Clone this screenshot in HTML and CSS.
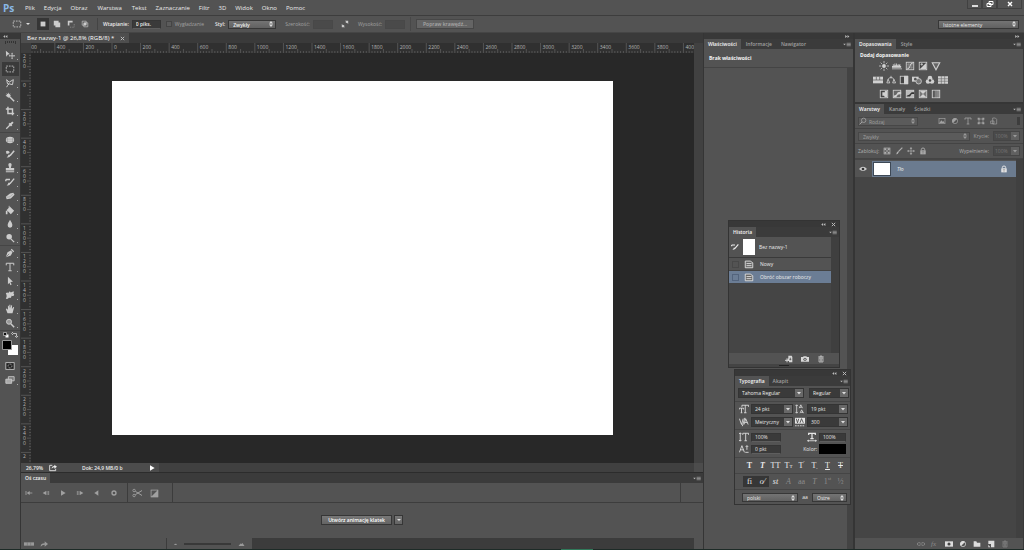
FILE: index.html
```html
<!DOCTYPE html>
<html lang="pl">
<head>
<meta charset="utf-8">
<title>Bez nazwy-1</title>
<link rel="stylesheet" href="styles.css">
</head>
<body>
<svg class="sprite" aria-hidden="true">
  <symbol id="menu" viewBox="0 0 9 6"><path d="M0 2h3L1.500 4z" fill="currentColor"/><path d="M4 1.500h5M4 3h5M4 4.500h5" stroke="currentColor" stroke-width=".7"/></symbol>
  <symbol id="right2" viewBox="0 0 6 4"><path d="M0 0l2.500 2L0 4zM3 0l2.500 2L3 4z" fill="currentColor"/></symbol>
  <symbol id="left2" viewBox="0 0 6 4"><path d="M2.500 0L0 2l2.500 2zM5.500 0L3 2l2.500 2z" fill="currentColor"/></symbol>
  <symbol id="close" viewBox="0 0 6 6"><path d="M1 1l4 4M5 1L1 5" stroke="currentColor" stroke-width="1.200"/></symbol>
  <symbol id="move" viewBox="0 0 12 12"><path d="M1 1l5 4-2.500.3L1.500 8z" fill="currentColor"/><path d="M8.500 4v6M5.500 7h6" stroke="currentColor"/><path d="M8.500 3l1 1.500h-2zM8.500 11l1-1.500h-2zM4.500 7L6 6v2zM12 7l-1.500-1v2z" fill="currentColor"/></symbol>
  <symbol id="marquee" viewBox="0 0 12 12"><rect x="1.500" y="2.500" width="9" height="7" fill="none" stroke="currentColor" stroke-dasharray="2 1.200"/></symbol>
  <symbol id="lasso" viewBox="0 0 12 12"><path d="M2 2l3 3 5-3-1 6-4-1-2 2-1 2M2 2l1 5 2 0" fill="none" stroke="currentColor" stroke-width="1.200"/></symbol>
  <symbol id="wand" viewBox="0 0 12 12"><path d="M5 5l6 6" stroke="currentColor" stroke-width="1.800"/><circle cx="4" cy="4" r="2" fill="currentColor"/><path d="M4 1v6M1 4h6M2 2l4 4M6 2L2 6" stroke="currentColor" stroke-width="1"/></symbol>
  <symbol id="crop" viewBox="0 0 12 12"><path d="M3.500 1v8H11M1 3.500h8V11" fill="none" stroke="currentColor" stroke-width="1.700"/></symbol>
  <symbol id="dropper" viewBox="0 0 12 12"><path d="M1.500 10.500L6 6" stroke="currentColor" stroke-width="1.500"/><path d="M5 4l3 3M6.500 5.500L9.500 2.500" stroke="currentColor" stroke-width="2.400"/></symbol>
  <symbol id="patch" viewBox="0 0 12 12"><ellipse cx="6" cy="6" rx="5" ry="3.800" fill="currentColor"/><path d="M3 3v6M9 3v6M1 5h10M1 7.500h10" stroke="#888" stroke-width=".5"/></symbol>
  <symbol id="brush" viewBox="0 0 12 12"><path d="M11 2L6 8" stroke="currentColor" stroke-width="1.800"/><path d="M1 3q2-2 4 0t-3 3M7 7q-1 4-5 3 2-1 2-3z" fill="currentColor"/></symbol>
  <symbol id="stamp" viewBox="0 0 12 12"><path d="M4 2a2 2 0 0 1 4 0L7 6h4v3H1V6h4zM1 10h10v1H1z" fill="currentColor"/></symbol>
  <symbol id="hist" viewBox="0 0 12 12"><path d="M11 2L6 8M1 3h5M1 3v2" fill="none" stroke="currentColor" stroke-width="1.700"/><path d="M7 7q-1 4-5 3 2-1 2-3z" fill="currentColor"/></symbol>
  <symbol id="eraser" viewBox="0 0 12 12"><path d="M1 7l5-4 4-1 1.500 2.500L7 9l-5 1z" fill="currentColor"/><path d="M2 7.500l4-.5 4-4" fill="none" stroke="#888" stroke-width=".6"/></symbol>
  <symbol id="bucket" viewBox="0 0 12 12"><path d="M2 6l4-4 5 5-4 4zM1 7h2v4H1z" fill="currentColor"/><path d="M5 5V1" stroke="currentColor"/></symbol>
  <symbol id="drop" viewBox="0 0 12 12"><path d="M6 1q6 9 0 9.500Q0 10 6 1z" fill="currentColor"/></symbol>
  <symbol id="dodge" viewBox="0 0 12 12"><circle cx="5" cy="4.500" r="3.300" fill="currentColor"/><path d="M7 7l4 4" stroke="currentColor" stroke-width="1.500"/></symbol>
  <symbol id="pen" viewBox="0 0 12 12"><path d="M1 11l2-6 4-2 2 2-2 4zM7 2l1-1 3 3-1 1z" fill="currentColor"/><path d="M1 11l4-4" stroke="#555" stroke-width=".7"/></symbol>
  <symbol id="type" viewBox="0 0 12 12"><path d="M1.500 4V1.500h9V4M6 1.500v9M4 10.500h4" fill="none" stroke="currentColor" stroke-width="1.200"/></symbol>
  <symbol id="arrow" viewBox="0 0 12 12"><path d="M3.500 1l6 6-3 .3 1.500 3-1.500.7L5.300 8l-1.800 2z" fill="currentColor"/></symbol>
  <symbol id="shape" viewBox="0 0 12 12"><path d="M1 4q2-2 3 0 1-4 3-1 3-2 4-1-2 2 0 3 0 3-3 2-1 4-3 2-3 3-4 1 2-2 0-6z" fill="currentColor"/></symbol>
  <symbol id="hand" viewBox="0 0 12 12"><path d="M3 11L1 6l1-.5L3.500 7V2h1L5.200 5V1h1.300v4l1-3.500h1L8.300 6 10 3.500l1 .5-2 7z" fill="currentColor"/></symbol>
  <symbol id="zoom" viewBox="0 0 12 12"><circle cx="4.800" cy="4.500" r="3" fill="#999" stroke="currentColor" stroke-width="1.200"/><path d="M7 7l4 4" stroke="currentColor" stroke-width="1.800"/></symbol>
  <symbol id="mask" viewBox="0 0 12 12"><rect x="1" y="2" width="10" height="8" fill="#222" stroke="currentColor"/><circle cx="6" cy="6" r="2.300" fill="#222" stroke="currentColor" stroke-width=".9" stroke-dasharray="1 .6"/></symbol>
  <symbol id="screens" viewBox="0 0 12 12"><path d="M4 2h7v5H4z" fill="#777" stroke="currentColor"/><path d="M1 5h7v5H1z" fill="#aaa" stroke="currentColor"/></symbol>
  <symbol id="sq1" viewBox="0 0 10 10"><rect x="2" y="2" width="6" height="6" fill="currentColor"/></symbol>
  <symbol id="sq2" viewBox="0 0 10 10"><path d="M1 1h6v2h2v6H3V7H1z" fill="currentColor"/></symbol>
  <symbol id="sq3" viewBox="0 0 10 10"><path d="M1 1h6v2H3v4H1z" fill="currentColor"/><path d="M4 9h5V4" fill="none" stroke="currentColor" stroke-dasharray="1 1" stroke-width=".6"/></symbol>
  <symbol id="sq4" viewBox="0 0 10 10"><path d="M1.500 1.500h5v5h-5zM3.500 3.500h5v5h-5z" fill="none" stroke="currentColor" stroke-width=".8"/><path d="M3.500 3.500h3v3h-3z" fill="currentColor"/></symbol>
  <symbol id="swap" viewBox="0 0 10 10"><path d="M4 7h-2M6 3h2" stroke="currentColor" stroke-width="1.200"/><path d="M5 1h4v4zM1 5v4h4z" fill="currentColor"/></symbol>
  <symbol id="sun" viewBox="0 0 12 12"><path d="M6 0v12M0 6h12M2 2l8 8M10 2l-8 8" stroke="currentColor" stroke-width=".9"/><circle cx="6" cy="6" r="3.400" fill="#535353"/><circle cx="6" cy="6" r="2.300" fill="currentColor"/></symbol>
  <symbol id="levels" viewBox="0 0 12 12"><path d="M0 8V6l1 0 0-2h1v2l1-1V3h1v2h1V3h1v3l1-2h1v2l1-2h1v2h1v2zM0 9h12v1H0z" fill="currentColor"/></symbol>
  <symbol id="curves" viewBox="0 0 12 12"><rect x="1.500" y="1.500" width="9" height="9" fill="#666" stroke="currentColor"/><path d="M2 10Q6 9 6 6t4-4" fill="none" stroke="currentColor" stroke-width="1.200"/><path d="M4.500 2v8M7.500 2v8M2 4.500h8M2 7.500h8" stroke="currentColor" stroke-width=".3"/></symbol>
  <symbol id="expo" viewBox="0 0 12 12"><rect x="1.500" y="1.500" width="9" height="9" fill="#444" stroke="currentColor"/><path d="M2 10l8-8v8z" fill="currentColor"/><path d="M3 4h3M4.500 2.500v3" stroke="currentColor"/></symbol>
  <symbol id="vib" viewBox="0 0 12 12"><path d="M1.500 2h9L6 10.500z" fill="#666" stroke="currentColor" stroke-width="1.300"/></symbol>
  <symbol id="hue" viewBox="0 0 12 12"><path d="M0 2h12v8H0z" fill="currentColor"/><path d="M4 2v4M8 2v4M0 6h12" stroke="#555" stroke-width=".8"/></symbol>
  <symbol id="scale" viewBox="0 0 12 12"><path d="M6 1v3M2.500 5Q6 1 9.500 5M2.500 5L1 9.500h3.500zM9.500 5L8 9.500h3.500z" fill="none" stroke="currentColor"/></symbol>
  <symbol id="bw" viewBox="0 0 12 12"><rect x="1.500" y="1.500" width="9" height="9" fill="#444" stroke="currentColor"/><path d="M6 1h5v10H6z" fill="currentColor"/></symbol>
  <symbol id="photo" viewBox="0 0 12 12"><path d="M0 2h8v6H0z" fill="currentColor"/><circle cx="8" cy="7.500" r="3.300" fill="#777" stroke="currentColor"/><circle cx="4" cy="5" r="1.600" fill="#555"/></symbol>
  <symbol id="mixer" viewBox="0 0 12 12"><circle cx="6" cy="3.800" r="2.800" fill="currentColor"/><circle cx="3.700" cy="7.800" r="2.800" fill="currentColor"/><circle cx="8.300" cy="7.800" r="2.800" fill="currentColor"/><circle cx="6" cy="6.500" r="1.500" fill="#444"/></symbol>
  <symbol id="grid" viewBox="0 0 12 12"><path d="M0 1.500h12v9H0z" fill="currentColor"/><path d="M0 4.500h12M0 7.500h12M4 1v10M8 1v10" stroke="#666" stroke-width=".7"/></symbol>
  <symbol id="invert" viewBox="0 0 12 12"><rect x="1.500" y="1.500" width="9" height="9" fill="#444" stroke="currentColor"/><path d="M7 2h3v8H7L6 8H4V4h3z" fill="currentColor"/></symbol>
  <symbol id="poster" viewBox="0 0 12 12"><rect x="1.500" y="1.500" width="9" height="9" fill="#666" stroke="currentColor"/><path d="M2 8l3-1 2-3 4-1v3L7 7 5 10H2z" fill="currentColor"/></symbol>
  <symbol id="thresh" viewBox="0 0 12 12"><rect x="1.500" y="1.500" width="9" height="9" fill="#bbb" stroke="currentColor"/><path d="M2 8l3-1 3-3h3v2H8L6 9H2z" fill="#333"/></symbol>
  <symbol id="select" viewBox="0 0 12 12"><rect x="1.500" y="1.500" width="9" height="9" fill="#777" stroke="currentColor"/><path d="M2 2l4 4 4-4zM2 10l4-4 4 4z" fill="currentColor"/></symbol>
  <symbol id="gmap" viewBox="0 0 12 12"><rect x="1.500" y="1.500" width="9" height="9" fill="#888" stroke="currentColor"/><path d="M3.500 2v8" stroke="#555" stroke-width="2"/><path d="M6 2v8" stroke="#777"/></symbol>
  <symbol id="image" viewBox="0 0 12 12"><rect x="1.500" y="2" width="9" height="8" fill="none" stroke="currentColor"/><path d="M2 9l3-4 2 2 1-1 2 3z" fill="currentColor"/></symbol>
  <symbol id="adjust" viewBox="0 0 12 12"><circle cx="6" cy="6" r="4" fill="none" stroke="currentColor"/><path d="M3 9a4 4 0 0 1 6-6z" fill="currentColor"/></symbol>
  <symbol id="frame" viewBox="0 0 12 12"><rect x="3" y="3" width="6" height="6" fill="none" stroke="currentColor"/><path d="M1 1h3v3H1zM8 1h3v3H8zM1 8h3v3H1zM8 8h3v3H8z" fill="currentColor"/></symbol>
  <symbol id="smart" viewBox="0 0 12 12"><path d="M4 1.500h4l2 2v7H4zM1 6h5v4H1z" fill="none" stroke="currentColor"/></symbol>
  <symbol id="checker" viewBox="0 0 12 12"><rect x="1.500" y="1.500" width="9" height="9" fill="#555" stroke="currentColor"/><path d="M2 2h3v3H2zM7 2h3v3H7zM5 5h2v2H5zM2 7h3v3H2zM7 7h3v3H7z" fill="currentColor"/></symbol>
  <symbol id="paint" viewBox="0 0 12 12"><path d="M11 1L5 7" stroke="currentColor" stroke-width="1.700"/><path d="M6 7q-1 4-5 4 2-1 2-4z" fill="currentColor"/></symbol>
  <symbol id="cross" viewBox="0 0 12 12"><path d="M6 2v8M2 6h8" stroke="currentColor"/><path d="M6 0l2 2.500H4zM6 12l2-2.500H4zM0 6l2.500-2v4zM12 6L9.500 4v4z" fill="currentColor"/></symbol>
  <symbol id="lock" viewBox="0 0 12 12"><path d="M3.500 5V3.500q0-2 2.500-2t2.500 2V5" fill="none" stroke="currentColor" stroke-width="1.300"/><path d="M2 5h8v6H2z" fill="currentColor"/><path d="M4 7h4M4 9h4" stroke="#666" stroke-width=".8"/></symbol>
  <symbol id="eye" viewBox="0 0 12 12"><path d="M0 6q6-7 12 0-6 6-12 0z" fill="currentColor"/><circle cx="6" cy="6" r="2" fill="#333"/></symbol>
  <symbol id="link" viewBox="0 0 12 12"><path d="M5 4H2.500q-2 0-2 2t2 2H5M7 4h2.500q2 0 2 2t-2 2H7M4 6h4" fill="none" stroke="currentColor" stroke-width="1.200"/></symbol>
  <symbol id="lmask" viewBox="0 0 12 12"><path d="M0 2h12v8H0z" fill="currentColor"/><circle cx="6" cy="6" r="2.300" fill="#444"/></symbol>
  <symbol id="folder" viewBox="0 0 12 12"><path d="M1 2h4l1 2h5v6H1z" fill="currentColor"/></symbol>
  <symbol id="page" viewBox="0 0 12 12"><path d="M2 1h9v10H6V6H2z" fill="currentColor"/><path d="M2 7l3 4H2z" fill="currentColor"/></symbol>
  <symbol id="trash" viewBox="0 0 12 12"><path d="M3 4.500h6v6H3zM1.500 3h9M4.500 3V1.500h3V3M5 5v5M7 5v5" fill="none" stroke="currentColor"/></symbol>
  <symbol id="camera" viewBox="0 0 12 12"><path d="M0 3h3l1-1h4l1 1h3v7H0z" fill="currentColor"/><circle cx="6" cy="6.500" r="2.300" fill="#444"/><circle cx="6" cy="6.500" r="1.200" fill="currentColor"/></symbol>
  <symbol id="newdoc" viewBox="0 0 12 12"><path d="M5 1h5l1 2v8H6V9H4V6l1-1z" fill="currentColor"/><path d="M3 5v6M0 8h6" stroke="currentColor" stroke-width="1.400"/><path d="M8 4v4M6.500 6.500h3" stroke="#444"/></symbol>
  <symbol id="doc" viewBox="0 0 12 12"><path d="M1.500 2.500h6l3 2v6h-9zM3 5.500h6M3 8h6" fill="#666" stroke="currentColor"/></symbol>
  <symbol id="first" viewBox="0 0 12 12"><path d="M1.500 3v6M6 6h5" stroke="currentColor" stroke-width="1.300"/><path d="M7 3v6L2.500 6z" fill="currentColor"/></symbol>
  <symbol id="prev" viewBox="0 0 12 12"><path d="M6 3v6L1 6z" fill="currentColor"/><path d="M7.500 3v6M10 3v6" stroke="currentColor" stroke-width="1.200"/></symbol>
  <symbol id="play" viewBox="0 0 12 12"><path d="M3 2l7 4-7 4z" fill="currentColor"/></symbol>
  <symbol id="next" viewBox="0 0 12 12"><path d="M6 3v6l5-3z" fill="currentColor"/><path d="M2 3v6M4.500 3v6" stroke="currentColor" stroke-width="1.200"/></symbol>
  <symbol id="sound" viewBox="0 0 12 12"><path d="M8 2v8L2 6z" fill="currentColor"/></symbol>
  <symbol id="gear" viewBox="0 0 12 12"><circle cx="6" cy="6" r="3" fill="none" stroke="currentColor" stroke-width="2"/></symbol>
  <symbol id="cut" viewBox="0 0 12 12"><path d="M4 4l8 5M4 8l8-5" stroke="currentColor" stroke-width="1.200"/><circle cx="2.500" cy="3" r="1.500" fill="none" stroke="currentColor"/><circle cx="2.500" cy="9" r="1.500" fill="none" stroke="currentColor"/></symbol>
  <symbol id="trans" viewBox="0 0 12 12"><rect x="2.500" y="2.500" width="8" height="8" fill="none" stroke="currentColor"/><path d="M2 11l9-9v9z" fill="currentColor"/></symbol>
  <symbol id="export" viewBox="0 0 12 12"><path d="M5 2H1v8h9V7" fill="none" stroke="currentColor" stroke-width="1.300"/><path d="M4 7q0-4 4-4V1l4 3-4 3V5q-2 0-4 2z" fill="currentColor"/></symbol>
  <symbol id="share" viewBox="0 0 12 12"><path d="M1 10q0-5 6-5V2l5 4-5 4V7q-4 0-6 3z" fill="currentColor"/></symbol>
  <symbol id="frames" viewBox="0 0 12 6"><path d="M0 1h12v4H0z" fill="currentColor"/><path d="M4 1v4M8 1v4" stroke="#666" stroke-width=".6"/></symbol>
  <symbol id="hill" viewBox="0 0 12 8"><path d="M0 8l4-5 2 1 2-2 4 6z" fill="currentColor"/></symbol>
  <symbol id="search" viewBox="0 0 12 12"><circle cx="7" cy="5" r="3.300" fill="none" stroke="currentColor" stroke-width="1.200"/><path d="M4.500 7.500L1 11" stroke="currentColor" stroke-width="1.500"/></symbol>
  <symbol id="size" viewBox="0 0 12 12"><path d="M3.500 3.500V1.500h8v2M7.500 1.500v9M6 10.500h3M.5 6.500V5h5v1.500M3 5v5.500M2 10.500h2" fill="none" stroke="currentColor"/></symbol>
  <symbol id="leading" viewBox="0 0 12 12"><path d="M2 1v10M.5 2.500L2 1l1.500 1.500M.5 9.500L2 11l1.500-1.500M5 5l2-4 2 4M6 4h2M6 11l2-4 2 4M7 10h3" fill="none" stroke="currentColor" stroke-width=".9"/></symbol>
  <symbol id="kern" viewBox="0 0 12 12"><path d="M.5 2L3 9l2-7M6 9l2-7 3 7M7 6.500h3M7 1L4 11" fill="none" stroke="currentColor"/></symbol>
  <symbol id="track" viewBox="0 0 12 12"><path d="M0 1h12v7H0z" fill="currentColor"/><path d="M1.500 2L3 7l1.500-5M6 7l1.800-5L10 7" fill="none" stroke="#444"/><path d="M0 10.500h12" stroke="currentColor" stroke-dasharray="2 1"/></symbol>
  <symbol id="vscale" viewBox="0 0 12 12"><path d="M4.500 3.500v-2h7v2M8 1.500v9M6.500 10.500h3M1.500 1v10M0 2.500L1.500 1 3 2.500M0 9.500L1.500 11 3 9.500" fill="none" stroke="currentColor"/></symbol>
  <symbol id="hscale" viewBox="0 0 12 12"><path d="M2 3.500v-2h8v2M6 1v7M4 8h4" fill="none" stroke="currentColor" stroke-width="1.500"/><path d="M1 10.500h10" stroke="currentColor"/><path d="M0 10.500L2 9v3zM12 10.500L10 9v3z" fill="currentColor"/></symbol>
  <symbol id="baseline" viewBox="0 0 12 12"><path d="M.5 10l3-8 3 8M1.500 7h4M9.500 2v5M8 3.500L9.500 2 11 3.500M7.500 10h4" fill="none" stroke="currentColor"/></symbol>
</svg>

<header class="menubar">
  <span class="logo">Ps</span>
  <nav class="menus">
    <button>Plik</button><button>Edycja</button><button>Obraz</button><button>Warstwa</button><button>Tekst</button><button>Zaznaczanie</button><button>Filtr</button><button>3D</button><button>Widok</button><button>Okno</button><button>Pomoc</button>
  </nav>
  <div class="winctl">
    <button aria-label="Minimalizuj"><svg viewBox="0 0 12 8"><path d="M3 6h6" stroke="#fff" stroke-width="1.600"/></svg></button><button aria-label="Przywróć"><svg viewBox="0 0 12 8"><path d="M5 1.500h4v3H5zM3 3.500h4v3H3z" fill="#555" stroke="#fff"/></svg></button><button class="wide" aria-label="Zamknij"><svg viewBox="0 0 12 8"><path d="M4 2l4 4M8 2L4 6" stroke="#fff" stroke-width="1.400"/></svg></button>
  </div>
</header>

<div class="options">
  <svg class="ic preset"><use href="#marquee"/></svg><i class="caret"></i>
  <div class="modes">
    <button class="on" aria-label="Nowe zaznaczenie"><svg class="ic8"><use href="#sq1"/></svg></button><button aria-label="Dodaj"><svg class="ic8"><use href="#sq2"/></svg></button><button aria-label="Odejmij"><svg class="ic8"><use href="#sq3"/></svg></button><button aria-label="Przetnij"><svg class="ic8"><use href="#sq4"/></svg></button>
  </div>
  <label class="strong opt feather">Wtapianie: <input class="field w28" value="0 piks."></label>
  <label class="dim opt smooth"><input type="checkbox" disabled> Wygładzanie</label>
  <label class="strong opt style">Styl: <select class="sel w48"><option>Zwykły</option></select></label>
  <label class="dim opt dims">Szerokość: <input class="field off w20" disabled></label>
  <svg class="ic8 swap"><use href="#swap"/></svg>
  <label class="dim opt dims">Wysokość: <input class="field off w20" disabled></label>
  <i class="vr divider"></i>
  <button class="btn off refine" disabled>Popraw krawędź...</button>
  <select class="sel workspace" aria-label="Obszar roboczy"><option>Istotne elementy</option></select>
</div>

<div class="workarea">
  <aside class="toolbox">
    <div class="strip"><svg class="dbl"><use href="#left2"/></svg></div>
    <i class="grip"></i>
    <div class="group">
      <button aria-label="Przesunięcie"><svg class="ic"><use href="#move"/></svg></button>
      <button class="on" aria-label="Zaznaczenie"><svg class="ic"><use href="#marquee"/></svg></button>
      <button aria-label="Lasso"><svg class="ic"><use href="#lasso"/></svg></button>
      <button aria-label="Różdżka"><svg class="ic"><use href="#wand"/></svg></button>
      <button aria-label="Kadrowanie"><svg class="ic"><use href="#crop"/></svg></button>
      <button aria-label="Kroplomierz"><svg class="ic"><use href="#dropper"/></svg></button>
    </div>
    <div class="group">
      <button aria-label="Łatka"><svg class="ic"><use href="#patch"/></svg></button>
      <button aria-label="Pędzel"><svg class="ic"><use href="#brush"/></svg></button>
      <button aria-label="Stempel"><svg class="ic"><use href="#stamp"/></svg></button>
      <button aria-label="Pędzel historii"><svg class="ic"><use href="#hist"/></svg></button>
      <button aria-label="Gumka"><svg class="ic"><use href="#eraser"/></svg></button>
      <button aria-label="Wiadro"><svg class="ic"><use href="#bucket"/></svg></button>
      <button aria-label="Rozmywanie"><svg class="ic"><use href="#drop"/></svg></button>
      <button aria-label="Rozjaśnianie"><svg class="ic"><use href="#dodge"/></svg></button>
    </div>
    <div class="group">
      <button aria-label="Pióro"><svg class="ic"><use href="#pen"/></svg></button>
      <button aria-label="Tekst"><svg class="ic"><use href="#type"/></svg></button>
      <button aria-label="Zaznaczanie ścieżek"><svg class="ic"><use href="#arrow"/></svg></button>
      <button aria-label="Kształt"><svg class="ic"><use href="#shape"/></svg></button>
      <button aria-label="Rączka"><svg class="ic"><use href="#hand"/></svg></button>
      <button aria-label="Lupka"><svg class="ic"><use href="#zoom"/></svg></button>
    </div>
    <svg class="colors" viewBox="0 0 18 28" role="img" aria-label="Kolory"><path d="M4.500 3.500h3v3h-3z" fill="#fff"/><path d="M2.500 1.500h3v3h-3z" fill="#111" stroke="#ccc" stroke-width=".7"/><path d="M12 2.500h3.500v3M12 1l-1.500 1.500L12 4M14 5l1.500 1.500L17 5" fill="none" stroke="#ccc" stroke-width=".9"/><path d="M7 14h10v10H7z" fill="#fff"/><path d="M1.500 9.500h9v9h-9z" fill="#000" stroke="#999"/></svg>
    <div class="group last">
      <button class="flat" aria-label="Szybka maska"><svg class="ic"><use href="#mask"/></svg></button>
      <button aria-label="Tryb ekranu"><svg class="ic"><use href="#screens"/></svg></button>
    </div>
  </aside>

  <main class="center">
    <div class="doctabs"><span class="tab on">Bez nazwy-1 @ 26,8% (RGB/8) * <svg class="x"><use href="#close"/></svg></span></div>
    <div class="doc">
      <div class="corner"></div>
      <svg class="ruler-h" id="rulerH"></svg>
      <svg class="ruler-v" id="rulerV"></svg>
      <div class="canvas"><div class="paper"></div></div>
      <div class="vscroll"></div>
    </div>
    <div class="status">
      <span class="pct">26,79%</span><svg class="ic8"><use href="#export"/></svg><span class="size">Dok: 24,9 MB/0 b</span><svg class="ic8 go"><use href="#play"/></svg><span class="hscroll"></span>
    </div>
    <section class="timeline">
      <div class="tabs"><span class="tab on">Oś czasu</span><svg class="pm"><use href="#menu"/></svg></div>
      <div class="transport">
        <button aria-label="Pierwsza"><svg class="ic8"><use href="#first"/></svg></button><button aria-label="Poprzednia"><svg class="ic8"><use href="#prev"/></svg></button><button aria-label="Odtwórz"><svg class="ic8"><use href="#play"/></svg></button><button aria-label="Następna"><svg class="ic8"><use href="#next"/></svg></button><button aria-label="Dźwięk"><svg class="ic8"><use href="#sound"/></svg></button><button aria-label="Opcje"><svg class="ic8"><use href="#gear"/></svg></button><i class="vr"></i><button aria-label="Tnij"><svg class="ic"><use href="#cut"/></svg></button><button aria-label="Przejście"><svg class="ic"><use href="#trans"/></svg></button><i class="vr mid"></i><i class="vr end"></i>
      </div>
      <div class="create"><button class="btn">Utwórz animację klatek</button><button class="btn drop" aria-label="Więcej"><i class="caret"></i></button></div>
      <div class="tfoot">
        <svg class="ic8 wide"><use href="#frames"/></svg><svg class="ic8"><use href="#share"/></svg>
        <i class="vr"></i><svg class="hill small"><use href="#hill"/></svg><i class="slot"></i><svg class="hill"><use href="#hill"/></svg><i class="bar"></i>
      </div>
    </section>
  </main>

  <aside class="props">
    <div class="strip"><svg class="dbl"><use href="#right2"/></svg></div>
    <div class="tabs"><span class="tab on">Właściwości</span><span class="tab">Informacje</span><span class="tab">Nawigator</span><svg class="pm"><use href="#menu"/></svg></div>
    <h2>Brak właściwości</h2>
    <div class="pbody"></div>
  </aside>

  <aside class="side">
    <div class="strip"><svg class="dbl"><use href="#right2"/></svg></div>
    <div class="tabs"><span class="tab on">Dopasowania</span><span class="tab">Style</span><svg class="pm"><use href="#menu"/></svg></div>
    <div class="adjust">
      <h2>Dodaj dopasowanie</h2>
      <div class="arow"><svg class="ic"><use href="#sun"/></svg><svg class="ic"><use href="#levels"/></svg><svg class="ic"><use href="#curves"/></svg><svg class="ic"><use href="#expo"/></svg><svg class="ic"><use href="#vib"/></svg></div>
      <div class="arow six"><svg class="ic"><use href="#hue"/></svg><svg class="ic"><use href="#scale"/></svg><svg class="ic"><use href="#bw"/></svg><svg class="ic"><use href="#photo"/></svg><svg class="ic"><use href="#mixer"/></svg><svg class="ic"><use href="#grid"/></svg></div>
      <div class="arow"><svg class="ic"><use href="#invert"/></svg><svg class="ic"><use href="#poster"/></svg><svg class="ic"><use href="#thresh"/></svg><svg class="ic"><use href="#select"/></svg><svg class="ic"><use href="#gmap"/></svg></div>
    </div>
    <div class="tabs"><span class="tab on">Warstwy</span><span class="tab">Kanały</span><span class="tab">Ścieżki</span><svg class="pm"><use href="#menu"/></svg></div>
    <div class="lrow dim filter">
      <span class="kind"><svg class="ic8"><use href="#search"/></svg><select class="sel off" aria-label="Rodzaj filtra" disabled><option>Rodzaj</option></select></span>
      <span class="ficons"><svg class="ic8"><use href="#image"/></svg><svg class="ic8"><use href="#adjust"/></svg><svg class="ic8"><use href="#type"/></svg><svg class="ic8"><use href="#frame"/></svg><svg class="ic8"><use href="#smart"/></svg></span><i class="toggle"></i>
    </div>
    <div class="lrow dim"><select class="sel off blend" aria-label="Tryb mieszania" disabled><option>Zwykły</option></select><label class="right">Krycie: <select class="combo off w24" disabled><option>100%</option></select></label></div>
    <div class="lrow dim locks"><span>Zablokuj:</span><svg class="ic8"><use href="#checker"/></svg><svg class="ic8"><use href="#paint"/></svg><svg class="ic8"><use href="#cross"/></svg><svg class="ic8"><use href="#lock"/></svg><label class="right">Wypełnienie: <select class="combo off w24" disabled><option>100%</option></select></label></div>
    <div class="layers"><div class="layer"><svg class="ic8 vis"><use href="#eye"/></svg><div class="lsel"><i class="thumb"></i><em>Tło</em><svg class="ic8"><use href="#lock"/></svg></div></div></div>
    <div class="lfoot"><svg class="ic8 dimi"><use href="#link"/></svg><em class="dimi">fx</em><svg class="ic8"><use href="#lmask"/></svg><svg class="ic8"><use href="#adjust"/></svg><svg class="ic8"><use href="#folder"/></svg><svg class="ic8"><use href="#page"/></svg><svg class="ic8 dimi"><use href="#trash"/></svg></div>
  </aside>
</div>
<footer class="taskbar"><i></i></footer>

<section class="float history">
  <div class="strip"><svg class="dbl"><use href="#left2"/></svg><svg class="x"><use href="#close"/></svg></div>
  <div class="tabs"><span class="tab on">Historia</span><svg class="pm"><use href="#menu"/></svg></div>
  <div class="hlist">
    <div class="snap"><svg class="ic8"><use href="#hist"/></svg><i class="thumb"></i><span>Bez nazwy-1</span></div>
    <div class="hitem"><i class="box"></i><svg class="ic"><use href="#doc"/></svg><span>Nowy</span></div>
    <div class="hitem on"><i class="box"></i><svg class="ic"><use href="#doc"/></svg><span>Obróć obszar roboczy</span></div>
  </div>
  <div class="hfoot"><svg class="ic8"><use href="#newdoc"/></svg><svg class="ic8"><use href="#camera"/></svg><svg class="ic8"><use href="#trash"/></svg></div>
  <div class="edge"><i></i></div>
</section>

<section class="float typo">
  <div class="strip"><svg class="dbl"><use href="#left2"/></svg><svg class="x"><use href="#close"/></svg></div>
  <div class="tabs"><span class="tab on">Typografia</span><span class="tab">Akapit</span><svg class="pm"><use href="#menu"/></svg></div>
  <div class="fonts"><select class="combo" aria-label="Czcionka"><option>Tahoma Regular</option></select><select class="combo" aria-label="Styl czcionki"><option>Regular</option></select></div>
  <div class="metrics">
    <svg class="ic"><use href="#size"/></svg><select class="combo" aria-label="Rozmiar"><option>24 pkt</option></select><svg class="ic"><use href="#leading"/></svg><select class="combo" aria-label="Interlinia"><option>19 pkt</option></select>
    <svg class="ic"><use href="#kern"/></svg><select class="combo" aria-label="Kerning"><option>Metryczny</option></select><svg class="ic"><use href="#track"/></svg><select class="combo" aria-label="Światło"><option>300</option></select>
  </div>
  <div class="scales">
    <svg class="ic"><use href="#vscale"/></svg><input class="field" aria-label="Skala pionowa" value="100%"><svg class="ic rt"><use href="#hscale"/></svg><input class="field" aria-label="Skala pozioma" value="100%">
    <svg class="ic"><use href="#baseline"/></svg><input class="field" aria-label="Linia bazowa" value="0 pkt"><span class="rt">Kolor:</span><button class="swatch" aria-label="Kolor tekstu"></button>
  </div>
  <div class="glyphs"><button><b>T</b></button><button><b><i>T</i></b></button><button>TT</button><button>T<small>T</small></button><button>T<sup>'</sup></button><button>T<small>,</small></button><button><u>T</u></button><button><s>T</s></button></div>
  <div class="glyphs ot"><button class="on">fi</button><button class="on"><i>o</i>⁄</button><button><i>st</i></button><button class="dimi"><i>A</i></button><button class="dimi">aa</button><button class="dimi"><i>T</i></button><button class="dimi">1<sup>st</sup></button><button class="dimi">½</button></div>
  <div class="lang"><select class="sel" aria-label="Język"><option>polski</option></select><span class="aa">aa</span><select class="sel" aria-label="Wygładzanie tekstu"><option>Ostre</option></select></div>
</section>
<script src="rulers.js"></script>
</body>
</html>
```

FILE: styles.css
```css
* { box-sizing: border-box; }
html { background: #535353; }
body { margin: 0; min-height: 100vh; display: flex; flex-direction: column; position: relative; background: #535353; color: #ebebeb; font: 5px/8px "Open Sans", "Noto Sans", sans-serif; }
button, input, select { font: inherit; color: inherit; margin: 0; padding: 0; border: 0; background: none; border-radius: 0; }
select { appearance: none; }
select:disabled, input:disabled { opacity: 1; }
h2 { margin: 0; font-size: 5px; line-height: 8px; font-weight: 700; color: #f4f4f4; }
.sprite { position: absolute; width: 0; height: 0; }
.ic { width: 10px; height: 10px; flex: none; }
.ic8 { width: 8px; height: 8px; flex: none; }
.dim { color: #a2a2a2; }
.dimi { color: #8c8c8c; }
.strong { font-weight: 600; }
.caret { border: 2px solid transparent; border-top: 2px solid #ddd; border-bottom: 0; width: 4px; height: 2px; flex: none; }
.vr { width: 1px; align-self: stretch; background: #3c3c3c; }

.field { height: 9px; padding: 0 3px; background: #3a3a3a; border: 1px solid #353535; border-bottom-color: #5e5e5e; }
.field.off { background: #4a4a4a; border-color: #484848; }
.sel { height: 9px; padding: 0 9px 0 4px; border: 1px solid #373737; background: url("data:image/svg+xml,%3Csvg xmlns='http://www.w3.org/2000/svg' viewBox='0 0 4 6'%3E%3Cpath d='M0 2.500L2 0l2 2.500zM0 3.500L2 6l2-2.500z' fill='%23ddd'/%3E%3C/svg%3E") no-repeat right 2px center / 4px 6px, linear-gradient(#747474, #616161); }
.sel.off { color: #a0a0a0; border-color: #474747; background: url("data:image/svg+xml,%3Csvg xmlns='http://www.w3.org/2000/svg' viewBox='0 0 4 6'%3E%3Cpath d='M0 2.500L2 0l2 2.500zM0 3.500L2 6l2-2.500z' fill='%23999'/%3E%3C/svg%3E") no-repeat right 2px center / 4px 6px, #5b5b5b; }
.combo { width: 100%; height: 10px; padding: 0 10px 0 3px; border: 1px solid #343434; background: url("data:image/svg+xml,%3Csvg xmlns='http://www.w3.org/2000/svg' viewBox='0 0 8 8'%3E%3Cpath d='M0 0h8v8H0z' fill='%23686868'/%3E%3Cpath d='M2 3h4L4 5.500z' fill='%23ddd'/%3E%3C/svg%3E") no-repeat right center / 8px 8px, #3a3a3a; }
.combo.off { padding: 0 8px 0 1px; color: #757575; border-color: #454545; background: url("data:image/svg+xml,%3Csvg xmlns='http://www.w3.org/2000/svg' viewBox='0 0 8 8'%3E%3Cpath d='M0 0h8v8H0z' fill='%23606060'/%3E%3Cpath d='M2 3h4L4 5.500z' fill='%23999'/%3E%3C/svg%3E") no-repeat right center / 8px 8px, #4a4a4a; }
.btn { height: 10px; border: 1px solid #363636; background: linear-gradient(#787878, #646464); color: #fff; font-weight: 600; line-height: 8px; }
.btn.off { background: #646464; border-color: #474747; color: #a8a8a8; }
.w20 { width: 20px; }
.w24 { width: 27px; }
.w28 { width: 29px; }
.w48 { width: 48px; }

.menubar { display: flex; align-items: center; height: 15px; padding-left: 3px; }
.logo { color: #8ab8e6; font-size: 10px; line-height: 14px; font-weight: 700; width: 14px; }
.menus { display: flex; gap: 9px; margin-left: 8px; font-size: 6px; flex: 1; }
.menus button:nth-child(n+4) { padding-left: 1px; }
.menus button:nth-child(n+6) { padding-left: 0; }
.winctl { display: flex; align-self: flex-start; margin-right: 2px; }
.winctl button { width: 15px; height: 9px; border: 1px solid #414141; border-top: 0; display: grid; place-items: center; }
.winctl .wide { width: 25px; }
.winctl svg { width: 12px; height: 8px; }

.options { display: flex; align-items: center; height: 18px; padding: 0 5px 0 12px; border-top: 1px solid #3d3d3d; border-bottom: 1px solid #454545; }
.preset { color: #ccc; }
.options > .caret { margin-left: 4px; }
.modes { display: flex; gap: 2px; margin-left: 7px; padding-right: 6px; border-right: 1px solid #444; }
.modes button { width: 12px; height: 12px; display: grid; place-items: center; color: #ccc; }
.modes .on { background: #363636; }
.opt { display: flex; align-items: center; gap: 3px; }
.feather { margin-left: 5px; }
.smooth { margin-left: 5px; }
.smooth input { appearance: none; width: 6px; height: 6px; border: 1px solid #444; background: #5b5b5b; }
.style { margin-left: 11px; }
.dims { margin-left: 9px; }
.swap { margin-left: 8px; color: #ccc; }
.divider { margin: 0 5px; align-self: center; height: 14px; background: #484848; }
.refine { width: 58px; }
.workspace { margin-left: auto; width: 81px; }

.workarea { flex: 1; display: flex; background: #353535; }
.strip { height: 6px; background: #383838; display: flex; align-items: center; justify-content: flex-end; gap: 5px; padding: 0 3px; color: #bbb; }
.dbl { width: 5px; height: 3px; }
.x { width: 5px; height: 5px; color: #bbb; }
.tabs { display: flex; height: 10px; background: #3b3b3b; }
.tab { padding: 0 4px; line-height: 10px; color: #a0a0a0; font-weight: 600; white-space: nowrap; }
.tab.on { background: #535353; color: #f4f4f4; }
.pm { width: 8px; height: 5px; margin: 3px 2px 0 auto; color: #bbb; }

.toolbox { width: 20px; background: #535353; margin-right: 1px; display: flex; flex-direction: column; align-items: center; }
.toolbox .strip { align-self: stretch; justify-content: flex-start; }
.grip { width: 11px; height: 2px; margin: 2px 0 5px; border: 1px dotted #333; }
.group { align-self: stretch; display: flex; flex-direction: column; align-items: center; border-bottom: 1px solid #454545; }
.group button { width: 17px; height: 14px; display: grid; place-items: center; color: #ccc; background: linear-gradient(#aaa, #aaa) no-repeat right 1px bottom 2px / 1px 1px; }
.group .on { background: #3a3a3a; }
.colors { width: 18px; height: 28px; }
.last { border: 0; }
.group .flat { background: none; }

.center { flex: 1; min-width: 0; display: flex; flex-direction: column; margin-right: 1px; }
.doctabs { height: 10px; background: #3a3a3a; display: flex; }
.doctabs .tab { font-size: 6px; font-weight: 400; display: flex; align-items: center; gap: 6px; background: #4e4e4e; padding: 0 4px 0 6px; color: #fff; }
.doc { flex: 1; display: grid; grid-template: 10px 1fr / 10px 1fr 9px; background: #282828; }
.corner { background: #3d3d3d; }
.ruler-h { width: 100%; height: 10px; background: #303030; grid-column: 2; }
.ruler-v { width: 10px; height: 100%; min-height: 0; background: #303030; grid-row: 2; }
.ruler-h text, .ruler-v text { fill: #b5b5b5; font: 5px "Open Sans", sans-serif; }
.ruler-h path, .ruler-v path { stroke: #6c6c6c; fill: none; }
.canvas { grid-area: 2 / 2; padding: 28px 0 28px 81px; min-width: 0; }
.paper { width: 501px; height: 354px; background: #fff; }
.vscroll { grid-area: 1 / 3 / 3; background: #414141; }
.status { display: flex; align-items: center; height: 10px; background: #4c4c4c; padding-left: 5px; font-weight: 600; border-bottom: 1px solid #2c2c2c; }
.pct { width: 23px; }
.size { margin-left: 25px; width: 66px; }
.go { color: #fff; }
.hscroll { flex: 1; align-self: stretch; margin: 0 9px 0 3px; background: #404040; }
.timeline { background: #535353; }
.transport { display: flex; align-items: center; height: 20px; padding: 0 22px 0 4px; border-bottom: 1px solid #3d3d3d; color: #a0a0a0; }
.transport button { width: 16px; margin-right: 1px; height: 10px; display: flex; align-items: center; }
.transport .ic { margin-left: 4px; }
.transport .mid { margin-left: 10px; }
.transport .end { margin-left: auto; }
.create { display: flex; justify-content: center; gap: 2px; height: 35px; padding: 12px 0; }
.create .btn { width: 71px; }
.create .drop { width: 9px; display: grid; place-items: center; }
.tfoot { display: flex; align-items: center; height: 11px; padding: 0 9px 0 3px; color: #999; gap: 6px; }
.tfoot .wide { width: 10px; }
.tfoot .vr { margin-left: 112px; }
.hill { width: 9px; height: 4px; }
.small { width: 5px; height: 2px; }
.slot { width: 47px; height: 2px; background: #393939; }
.bar { flex: 1; align-self: stretch; background: #3c3c3c; }

.props { width: 149px; background: #535353; margin-right: 2px; display: flex; flex-direction: column; }
.props .tabs, .side .tabs { gap: 1px; }
.props h2 { padding: 5px; height: 19px; border-bottom: 1px solid #444; }
.pbody { flex: 1; border-right: 6px solid #434343; }
.side { width: 169px; background: #535353; display: flex; flex-direction: column; border-right: 1px solid #383838; }
.adjust { padding: 2px 5px; height: 55px; border-bottom: 2px solid #363636; }
.arow { display: flex; gap: 3px; height: 14px; align-items: center; padding-left: 19px; color: #d0d0d0; }
.arow.six { padding-left: 13px; }
.lrow { display: flex; align-items: center; height: 15px; padding: 0 3px; border-bottom: 1px solid #444; }
.right { margin-left: auto; display: flex; gap: 4px; align-items: center; }
.kind { display: flex; width: 60px; background: #5b5b5b; border: 1px solid #474747; height: 9px; align-items: center; }
.kind .sel { flex: 1; border: 0; height: 7px; padding-left: 2px; }
.ficons { display: flex; gap: 5px; margin-left: 20px; }
.toggle { margin-left: auto; width: 3px; height: 8px; background: #3d3d3d; }
.blend { width: 112px; }
.locks { gap: 4px; color: #b0b0b0; }
.layers { flex: 1; background: #454545; border-right: 7px solid #404040; padding-top: 1px; }
.layer { display: flex; align-items: center; background: #535353; height: 17px; }
.vis { margin: 0 5px 0 4px; color: #ccc; }
.lsel { flex: 1; height: 16px; background: #6b7b8f; display: flex; align-items: center; padding: 0 8px 0 2px; color: #f0f0f0; }
.lsel em { margin-left: 7px; flex: 1; }
.lsel .thumb { width: 16px; height: 12px; background: #fff; outline: 1px solid #3d4855; }
.lfoot { height: 11px; display: flex; align-items: center; justify-content: flex-end; gap: 6px; padding-right: 14px; color: #ddd; }
.lfoot em { font-family: "Liberation Serif", serif; font-size: 7px; width: 8px; }
.lfoot .dimi { color: #8c8c8c; }
.taskbar { height: 2px; background: #1d2b27; display: flex; }
.taskbar i { width: 32px; margin-left: 561px; background: #2f7a5a; }

.float { position: absolute; background: #535353; border: 1px solid #333; }
.history { top: 220px; right: 184px; width: 112px; }
.typo { top: 369px; right: 173px; width: 117px; }
.hlist { height: 116px; background: #454545; border-right: 8px solid #3f3f3f; }
.snap { display: flex; align-items: center; height: 21px; padding-left: 2px; background: #535353; border-bottom: 1px solid #3a3a3a; }
.snap .thumb { width: 12px; height: 16px; margin: 0 4px 0 4px; background: #fff; }
.hitem { display: flex; align-items: center; height: 13px; background: #535353; border-bottom: 1px solid #444; padding-left: 3px; }
.hitem .box { width: 7px; height: 7px; border: 1px solid #484848; margin-right: 5px; }
.hitem span { margin-left: 6px; }
.hitem.on { background: #6b7d95; }
.hitem.on .box { border-color: #53647d; }
.hfoot { display: flex; gap: 8px; height: 11px; align-items: center; justify-content: flex-end; padding-right: 14px; color: #d8d8d8; }
.edge { height: 3px; background: #444; display: grid; place-items: center; }
.edge i { width: 10px; height: 1px; background: #222; }
.fonts { display: grid; grid-template-columns: 66px 1fr; gap: 5px; padding: 2px 1px 3px 3px; border-bottom: 1px solid #454545; }
.metrics { display: grid; grid-template-columns: 10px 42px 10px 1fr; gap: 3px 2px; padding: 2px 2px 2px 4px; align-items: center; border-bottom: 1px solid #454545; color: #e6e6e6; }
.scales { display: grid; grid-template-columns: 10px 30px 34px 1fr; gap: 2px; padding: 2px 4px 3px 4px; align-items: center; border-bottom: 1px solid #454545; color: #e6e6e6; }
.scales .field { width: 100%; min-width: 0; }
.rt { justify-self: end; }
.swatch { height: 10px; background: #000; }
.glyphs { display: grid; grid-template-columns: repeat(8, 13px); height: 16px; align-items: center; padding-left: 8px; border-bottom: 1px solid #454545; font: 8px/10px "Liberation Serif", serif; }
.glyphs button { height: 11px; line-height: 10px; white-space: nowrap; }
.glyphs small, .glyphs sup { font-size: 5px; line-height: 1; }
.glyphs .on { background: #363636; }
.lang { display: grid; grid-template-columns: 56px 10px 35px; gap: 2px; padding: 3px 5px 2px 7px; }
.aa { text-align: center; }
```

FILE: rulers.js
```js
// Document units to screen pixels: 200 units span one labelled division.
const DIVISION = 200 / 7;
const MINOR = DIVISION / 10;

function buildRuler(svg, origin, vertical) {
  const length = vertical ? svg.clientHeight : svg.clientWidth;
  const first = -Math.ceil(origin / DIVISION);
  const last = Math.floor((length - origin) / DIVISION);
  let ticks = '';
  let labels = '';
  for (let n = first; n <= last; n++) {
    const at = origin + n * DIVISION;
    ticks += vertical ? `M0 ${at}H10` : `M${at} 0V10`;
    for (let m = 1; m < 10; m++) {
      const p = at + m * MINOR;
      const from = m === 5 ? 6 : 8;
      ticks += vertical ? `M${from} ${p}H10` : `M${p} ${from}V10`;
    }
    const value = String(Math.abs(n * 200));
    if (vertical) {
      [...value].forEach((d, i) => {
        const y = at + 6 + i * 5;
        if (y > 4 && y < length) labels += `<text x="2" y="${y}">${d}</text>`;
      });
    } else {
      labels += `<text x="${at + 2}" y="6">${value}</text>`;
    }
  }
  svg.innerHTML = `<path stroke-width=".6" d="${ticks}"/>${labels}`;
}

function drawRulers() {
  buildRuler(document.getElementById('rulerH'), 81, false);
  buildRuler(document.getElementById('rulerV'), 28, true);
}

drawRulers();
window.addEventListener('resize', drawRulers);
```
